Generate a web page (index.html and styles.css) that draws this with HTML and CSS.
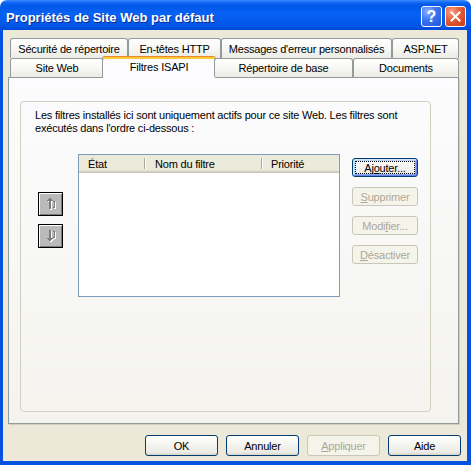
FILE: index.html
```html
<!DOCTYPE html>
<html lang="fr">
<head>
<meta charset="utf-8">
<title>Propriétés de Site Web par défaut</title>
<link rel="stylesheet" href="styles.css">
</head>
<body>
<div class="window">
  <div class="titlebar">
    <span class="title">Propriétés de Site Web par défaut</span>
    <div class="cap-btns">
      <span class="cap-btn help">?</span>
      <span class="cap-btn close">
        <svg width="13" height="13" viewBox="0 0 13 13"><path d="M2.5 2.5 L10.5 10.5 M10.5 2.5 L2.5 10.5" stroke="#fff" stroke-width="2" stroke-linecap="square"/></svg>
      </span>
    </div>
  </div>
  <div class="client">
    <div class="tabs">
      <div class="tab-row">
        <div class="tab t-sec">Sécurité de répertoire</div>
        <div class="tab t-http">En-têtes HTTP</div>
        <div class="tab t-msg">Messages d'erreur personnalisés</div>
        <div class="tab t-asp">ASP.NET</div>
      </div>
      <div class="tab-row front">
        <div class="tab t-site">Site Web</div>
        <div class="tab t-isapi selected">Filtres ISAPI</div>
        <div class="tab t-rep">Répertoire de base</div>
        <div class="tab t-doc">Documents</div>
      </div>
    </div>
    <div class="panel">
      <div class="group">
        <p class="intro">Les filtres installés ici sont uniquement actifs pour ce site Web. Les filtres sont<br>exécutés dans l'ordre ci-dessous :</p>
        <div class="filters">
          <div class="arrows">
            <span class="arrow-btn">
              <svg width="10" height="12" viewBox="0 0 10 12" shape-rendering="crispEdges">
                <g fill="#fff"><rect x="4" y="1" width="2" height="1"/><rect x="3" y="2" width="4" height="1"/><rect x="2" y="3" width="6" height="1"/><rect x="4" y="4" width="2" height="8"/><rect x="9" y="4" width="1" height="7"/><rect x="8" y="4" width="1" height="1"/><rect x="8" y="10" width="1" height="1"/></g>
                <g fill="#7d7d7d"><rect x="3" y="0" width="2" height="1"/><rect x="2" y="1" width="4" height="1"/><rect x="1" y="2" width="6" height="1"/><rect x="3" y="3" width="2" height="8"/><rect x="8" y="3" width="1" height="7"/><rect x="7" y="3" width="1" height="1"/><rect x="7" y="9" width="1" height="1"/></g>
              </svg>
            </span>
            <span class="arrow-btn">
              <svg width="10" height="12" viewBox="0 0 10 12" shape-rendering="crispEdges">
                <g fill="#fff"><rect x="4" y="1" width="2" height="8"/><rect x="2" y="9" width="6" height="1"/><rect x="3" y="10" width="4" height="1"/><rect x="4" y="11" width="2" height="1"/><rect x="9" y="2" width="1" height="7"/><rect x="8" y="2" width="1" height="1"/><rect x="8" y="8" width="1" height="1"/></g>
                <g fill="#7d7d7d"><rect x="3" y="0" width="2" height="8"/><rect x="1" y="8" width="6" height="1"/><rect x="2" y="9" width="4" height="1"/><rect x="3" y="10" width="2" height="1"/><rect x="8" y="1" width="1" height="7"/><rect x="7" y="1" width="1" height="1"/><rect x="7" y="7" width="1" height="1"/></g>
              </svg>
            </span>
          </div>
          <div class="list">
            <div class="list-head">
              <span class="col c-etat">État</span>
              <span class="col c-nom">Nom du filtre</span>
              <span class="col c-prio">Priorité</span>
            </div>
          </div>
          <div class="side-btns">
            <span class="btn focused"><span class="focus-ring">Aj<u>o</u>uter...</span></span>
            <span class="btn disabled"><u>S</u>upprimer</span>
            <span class="btn disabled">Modi<u>f</u>ier...</span>
            <span class="btn disabled"><u>D</u>ésactiver</span>
          </div>
        </div>
      </div>
    </div>
    <div class="footer">
      <span class="btn big">OK</span>
      <span class="btn big">Annuler</span>
      <span class="btn big disabled"><u>A</u>ppliquer</span>
      <span class="btn big">Aide</span>
    </div>
  </div>
</div>
</body>
</html>
```

FILE: styles.css
```css
* { box-sizing: border-box; }
html, body { margin: 0; padding: 0; }
body {
  width: 471px;
  height: 465px;
  overflow: hidden;
  background: #ffffff;
  font-family: "Liberation Sans", Arial, sans-serif;
  font-size: 11px;
  color: #000;
}

.window {
  width: 471px;
  height: 465px;
  display: flex;
  flex-direction: column;
}

/* Title bar */
.titlebar {
  height: 30px;
  flex: none;
  display: flex;
  align-items: flex-start;
  justify-content: space-between;
  padding: 0 5px 0 6px;
  border-radius: 7px 7px 0 0;
  background: linear-gradient(to bottom, #3a8cff 0, #0d63f2 3px, #0058e8 6px, #0862f6 45%, #0056e6 85%, #0049d9 100%);
}
.title {
  margin-top: 10px;
  line-height: 16px;
  font-size: 13px;
  font-weight: bold;
  color: #fff;
  text-shadow: 1px 1px 0 #0c2a96;
  white-space: nowrap;
}
.cap-btns {
  display: flex;
  gap: 3px;
  margin-top: 6px;
}
.cap-btn {
  width: 21px;
  height: 21px;
  border: 1px solid #fff;
  border-radius: 3px;
  display: flex;
  align-items: center;
  justify-content: center;
  color: #fff;
}
.help {
  background: radial-gradient(circle at 30% 25%, #8db2ff 0, #3a73f0 45%, #1f55d8 100%);
  font-size: 16px;
  font-weight: bold;
  line-height: 1;
}
.close {
  background: radial-gradient(circle at 30% 25%, #f7a385 0, #e25b37 45%, #c63c17 100%);
}

/* Client area */
.client {
  flex: 1;
  display: flex;
  flex-direction: column;
  background: #ece9d8;
  border-left: 3px solid #0552e0;
  border-right: 4px solid #0552e0;
  border-bottom: 4px solid #0552e0;
}

/* Tabs */
.tabs {
  flex: none;
  padding: 8px 0 0 7px;
  z-index: 2;
}
.tab-row {
  display: flex;
  height: 20px;
}
.tab-row.front {
  height: 19px;
}
.tab {
  height: 100%;
  border: 1px solid #919b9c;
  border-bottom: none;
  border-radius: 3px 3px 0 0;
  background: linear-gradient(to bottom, #ffffff, #f7f7f4 50%, #ecebe5);
  display: flex;
  align-items: center;
  justify-content: center;
  white-space: nowrap;
  letter-spacing: -0.2px;
}
.t-sec { width: 118px; }
.t-http { width: 93px; }
.t-msg { width: 171px; }
.t-asp { width: 67px; }
.t-site { width: 94px; }
.t-rep { width: 139px; }
.t-doc { width: 106px; }
.tab.selected {
  width: 114px;
  height: 22px;
  margin: -2px -2px -1px;
  background: #fcfcfe;
  border-top-color: #e68b2c;
  box-shadow: inset 0 2px 0 #ffc83c;
  align-items: flex-start;
  padding-top: 4px;
}

/* Panel */
.panel {
  flex: none;
  width: 451px;
  height: 347px;
  margin-left: 5px;
  border: 1px solid #919b9c;
  box-shadow: 1px 1px 0 #d2cfc2;
  background: linear-gradient(to bottom, #fcfcfe, #f4f3ee);
  padding: 23px 0 0 11px;
}
.group {
  width: 411px;
  height: 311px;
  border: 1px solid #d0d0bf;
  border-radius: 4px;
  padding: 7px 0 0 14px;
}
.intro {
  margin: 0;
  line-height: 13px;
  letter-spacing: -0.2px;
}

.filters {
  display: flex;
  margin-top: 19px;
  margin-left: 3px;
}
.arrows {
  display: flex;
  flex-direction: column;
  gap: 8px;
  padding-top: 38px;
}
.arrow-btn {
  width: 25px;
  height: 24px;
  border: 1px solid #000;
  background: #bababa;
  box-shadow: inset 1px 1px 0 #ffffff, inset -1px -1px 0 #7b7b7b;
  display: flex;
  align-items: center;
  justify-content: center;
}

.list {
  width: 262px;
  height: 143px;
  margin-left: 15px;
  border: 1px solid #7f9db9;
  background: #fff;
}
.list-head {
  display: flex;
  height: 18px;
  background: linear-gradient(to bottom, #ebeadb 0, #ebeadb 15px, #e2e2da 15px, #e2e2da 16px, #d6d3c6 16px, #d6d3c6 17px, #cbc7b8 17px);
}
.col {
  position: relative;
  height: 18px;
  line-height: 18px;
  padding-left: 9px;
  white-space: nowrap;
  letter-spacing: -0.2px;
}
.col::after {
  content: "";
  position: absolute;
  right: 0;
  top: 3px;
  width: 2px;
  height: 11px;
  background: linear-gradient(to right, #aca899 50%, #ffffff 50%);
}
.c-etat { width: 67px; }
.c-nom { width: 117px; }
.c-prio { width: 76px; padding-left: 8px; }
.c-prio::after { display: none; }

.side-btns {
  display: flex;
  flex-direction: column;
  gap: 10px;
  margin-left: 12px;
  padding-top: 4px;
}

/* Buttons */
.btn {
  width: 66px;
  height: 19px;
  border: 1px solid #003c74;
  border-radius: 3px;
  background: linear-gradient(to bottom, #ffffff 0, #f5f5f1 40%, #ecebe6 85%, #d8d4c8 100%);
  display: flex;
  align-items: center;
  justify-content: center;
  white-space: nowrap;
  letter-spacing: -0.2px;
}
.btn.disabled {
  border-color: #c9c7ba;
  background: #f5f4ea;
  color: #aca899;
}
.btn.focused {
  padding: 2px;
  box-shadow: inset 1px 1px 0 #cee7ff, inset -1px -1px 0 #6982ee, inset 2px 2px 0 #bcd4f6, inset -2px -2px 0 #89ade4;
}
.focus-ring {
  flex: 1;
  align-self: stretch;
  border: 1px dotted #000;
  display: flex;
  align-items: center;
  justify-content: center;
}
.btn.big {
  width: 73px;
  height: 21px;
}

.footer {
  flex: none;
  display: flex;
  gap: 8px;
  margin-top: 11px;
  padding-left: 142px;
}
```
